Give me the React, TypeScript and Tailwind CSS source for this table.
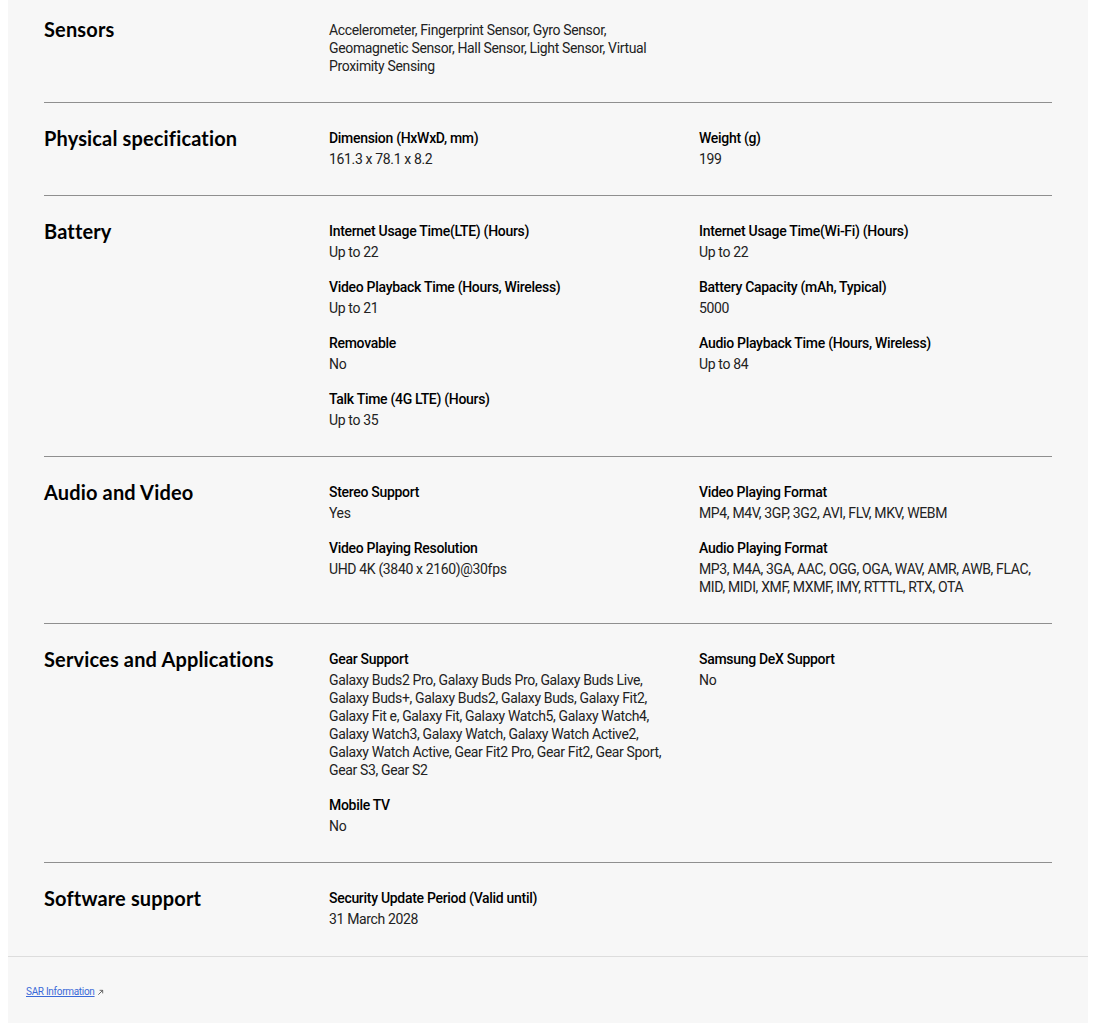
import React from 'react';

type Spec = { label: string; value: string[] };

interface SectionData {
  title: string;
  plain?: string[]; // free text, no label
  specs?: Spec[];
}

const sections: SectionData[] = [
  {
    title: 'Sensors',
    plain: [
      'Accelerometer, Fingerprint Sensor, Gyro Sensor,',
      'Geomagnetic Sensor, Hall Sensor, Light Sensor, Virtual',
      'Proximity Sensing',
    ],
  },
  {
    title: 'Physical specification',
    specs: [
      { label: 'Dimension (HxWxD, mm)', value: ['161.3 x 78.1 x 8.2'] },
      { label: 'Weight (g)', value: ['199'] },
    ],
  },
  {
    title: 'Battery',
    specs: [
      { label: 'Internet Usage Time(LTE) (Hours)', value: ['Up to 22'] },
      { label: 'Internet Usage Time(Wi-Fi) (Hours)', value: ['Up to 22'] },
      { label: 'Video Playback Time (Hours, Wireless)', value: ['Up to 21'] },
      { label: 'Battery Capacity (mAh, Typical)', value: ['5000'] },
      { label: 'Removable', value: ['No'] },
      { label: 'Audio Playback Time (Hours, Wireless)', value: ['Up to 84'] },
      { label: 'Talk Time (4G LTE) (Hours)', value: ['Up to 35'] },
    ],
  },
  {
    title: 'Audio and Video',
    specs: [
      { label: 'Stereo Support', value: ['Yes'] },
      { label: 'Video Playing Format', value: ['MP4, M4V, 3GP, 3G2, AVI, FLV, MKV, WEBM'] },
      { label: 'Video Playing Resolution', value: ['UHD 4K (3840 x 2160)@30fps'] },
      {
        label: 'Audio Playing Format',
        value: [
          'MP3, M4A, 3GA, AAC, OGG, OGA, WAV, AMR, AWB, FLAC,',
          'MID, MIDI, XMF, MXMF, IMY, RTTTL, RTX, OTA',
        ],
      },
    ],
  },
  {
    title: 'Services and Applications',
    specs: [
      {
        label: 'Gear Support',
        value: [
          'Galaxy Buds2 Pro, Galaxy Buds Pro, Galaxy Buds Live,',
          'Galaxy Buds+, Galaxy Buds2, Galaxy Buds, Galaxy Fit2,',
          'Galaxy Fit e, Galaxy Fit, Galaxy Watch5, Galaxy Watch4,',
          'Galaxy Watch3, Galaxy Watch, Galaxy Watch Active2,',
          'Galaxy Watch Active, Gear Fit2 Pro, Gear Fit2, Gear Sport,',
          'Gear S3, Gear S2',
        ],
      },
      { label: 'Samsung DeX Support', value: ['No'] },
      { label: 'Mobile TV', value: ['No'] },
    ],
  },
  {
    title: 'Software support',
    specs: [{ label: 'Security Update Period (Valid until)', value: ['31 March 2028'] }],
  },
];

const bodyFont = { fontFamily: 'Roboto, "Noto Sans", sans-serif' };

const Lines: React.FC<{ lines: string[] }> = ({ lines }) => (
  <>
    {lines.map((l) => (
      <div key={l} className="whitespace-nowrap">
        {l}
      </div>
    ))}
  </>
);

const SpecSection: React.FC<{ data: SectionData; first?: boolean; last?: boolean }> = ({
  data,
  first,
  last,
}) => (
  <div
    className={`flex ${last ? 'pb-3' : 'border-b border-[#8f8f8f] pb-[11px]'} ${
      first ? 'pt-[21px]' : 'pt-[25px]'
    }`}
  >
    <h3
      className={`w-[285px] shrink-0 font-['Lato',sans-serif] text-[20px] font-bold leading-[16px] tracking-[0.15px] text-black ${
        first ? 'mt-0' : 'mt-[2px]'
      }`}
    >
      {data.title}
    </h3>
    {data.plain ? (
      <div className="mb-4 text-[14px] leading-[18px] tracking-[-0.35px] text-[#222]">
        <Lines lines={data.plain} />
      </div>
    ) : (
      <div className="grid flex-1 grid-cols-[340px_1fr] gap-x-[30px]">
        {data.specs!.map((s) => (
          <div key={s.label} className="mb-4">
            <p className="text-[14px] font-medium leading-[20px] tracking-[-0.3px] text-black">
              {s.label}
            </p>
            <div className="mt-[2px] text-[14px] leading-[18px] tracking-[-0.35px] text-[#222]">
              <Lines lines={s.value} />
            </div>
          </div>
        ))}
      </div>
    )}
  </div>
);

export default function App() {
  return (
    <div className="min-h-screen bg-white" style={bodyFont}>
      <div className="ml-2 w-[1080px] bg-[#f7f7f7]">
        <div className="px-9">
          {sections.map((s, i) => (
            <SpecSection
              key={s.title}
              data={s}
              first={i === 0}
              last={i === sections.length - 1}
            />
          ))}
        </div>
        <div className="flex border-t border-[#dddddd] px-[18px] pt-[29px] pb-[40px] text-[10px] leading-[12px]">
          <a
            href="#"
            className="flex items-center tracking-[-0.3px] text-[#3a6ad8] underline"
          >
            SAR Information
            <svg
              viewBox="0 0 8 8"
              className="ml-[2px] h-[7px] w-[7px] text-[#555]"
              fill="none"
              stroke="currentColor"
              strokeWidth="1"
            >
              <path d="M1.5 6.5 L6.5 1.5 M3 1.5 H6.5 V5" />
            </svg>
          </a>
        </div>
      </div>
    </div>
  );
}
